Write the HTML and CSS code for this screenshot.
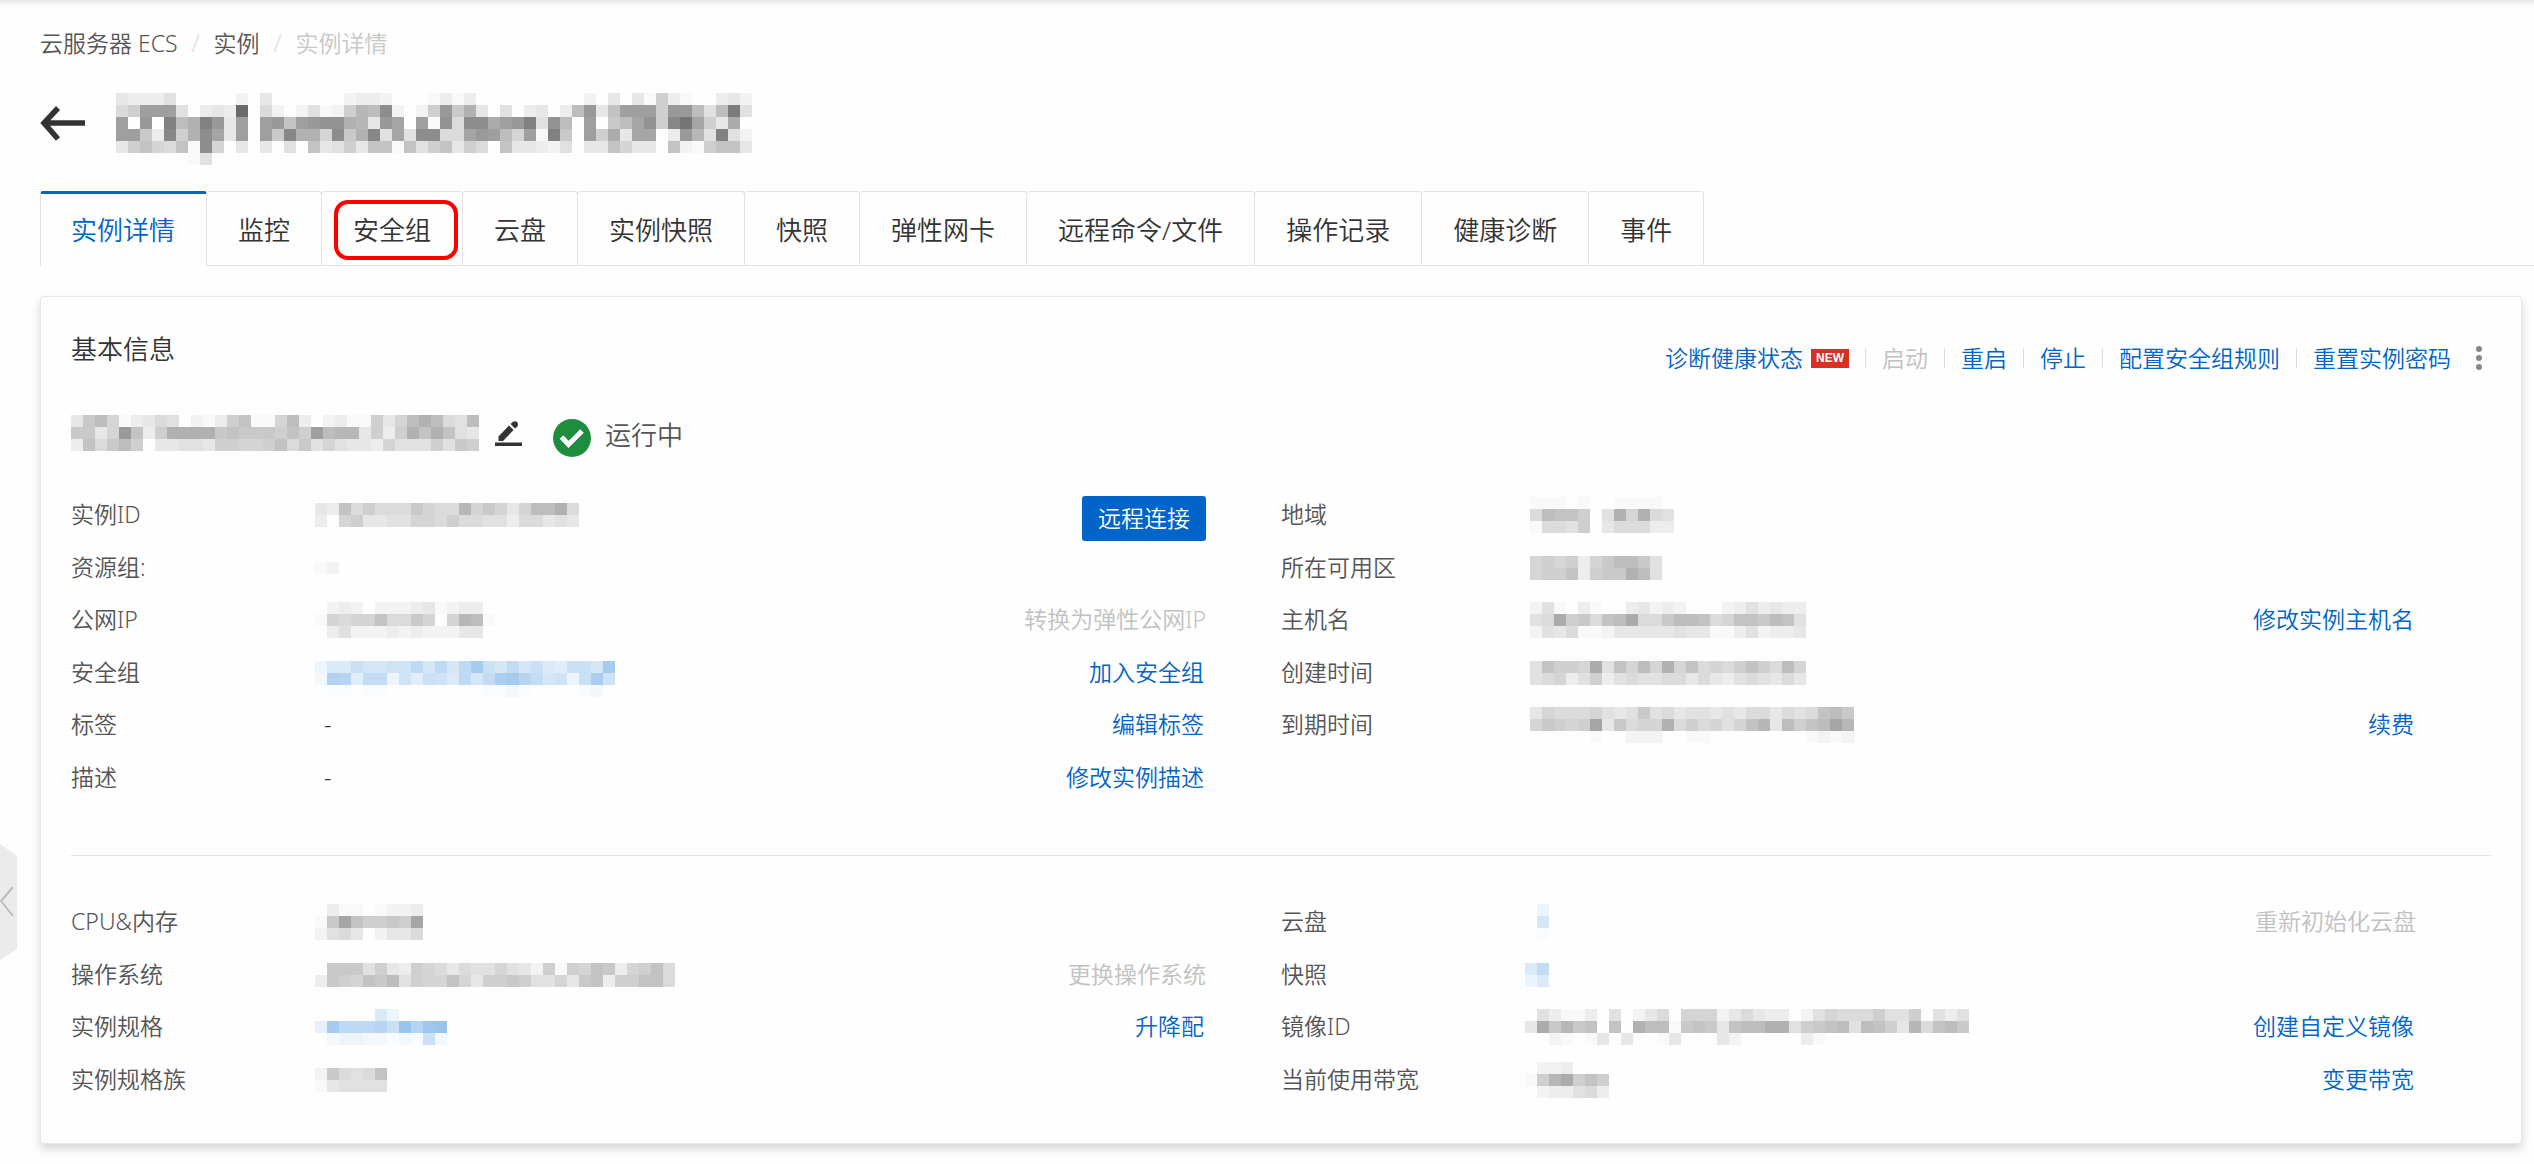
FILE: index.html
```html
<!DOCTYPE html>
<html lang="zh-CN">
<head>
<meta charset="utf-8">
<meta name="viewport" content="width=device-width, initial-scale=1">
<title>实例详情</title>
<link rel="stylesheet" href="styles.css">
</head>
<body>
<button class="side-toggle" type="button" aria-label="展开">
  <svg width="18" height="116" viewBox="0 0 18 116" aria-hidden="true"><path d="M0 0L17 12V105L0 116Z" fill="#ebebeb"/><path d="M13 43L1 57L13 72" fill="none" stroke="#bbb" stroke-width="2"/></svg>
</button>
<div class="page">
  <nav class="breadcrumb" aria-label="breadcrumb">
    <a href="#">云服务器 ECS</a><span class="slash">/</span><a href="#">实例</a><span class="slash">/</span><span class="current">实例详情</span>
  </nav>

  <header class="title">
    <a class="back" href="#" aria-label="返回">
      <svg width="45" height="60" viewBox="0 0 45 60" aria-hidden="true"><path d="M45 30H5M18 15L4 30L18 46" fill="none" stroke="#333" stroke-width="5.5"/></svg>
    </a>
    <h1><svg class="mosaic" data-rows="EDDDFAAAAACAEAAAAAACDDCAAABDBDAAAAAAAAACAEAEBIDBAADEC GIQQQFADEDZAGCACFBCIMLTCACIRJNEAFADEADLREKQQQIRRLFLWF QARAVLNVREQAQRKQRSSNMERPAQBSGTTOQRVFSLAQAJLPSIUXPIEOA QQJDUINTPEQAQJUNNHTJNUFPFTTGGPRQLHQBVJAQIOEPPADRMFVFC EIKHGKBTHAEAEAFAKEFIEKKBKFIKEIGAKEEDCFAEEKHEEAKCBIKKE AAAAAABFA"></svg></h1>
  </header>

  <nav class="tabs">
    <a class="tab active" href="#">实例详情</a>
    <a class="tab" href="#">监控</a>
    <a class="tab marked" href="#">安全组</a>
    <a class="tab" href="#">云盘</a>
    <a class="tab" href="#">实例快照</a>
    <a class="tab" href="#">快照</a>
    <a class="tab" href="#">弹性网卡</a>
    <a class="tab" href="#">远程命令/文件</a>
    <a class="tab" href="#">操作记录</a>
    <a class="tab" href="#">健康诊断</a>
    <a class="tab" href="#">事件</a>
  </nav>

  <main class="card">
    <div class="card-head">
      <h2>基本信息</h2>
      <div class="actions">
        <a href="#">诊断健康状态</a><span class="badge">NEW</span>
        <span class="sep"></span><span class="disabled">启动</span>
        <span class="sep"></span><a href="#">重启</a>
        <span class="sep"></span><a href="#">停止</a>
        <span class="sep"></span><a href="#">配置安全组规则</a>
        <span class="sep"></span><a href="#">重置实例密码</a>
        <button class="more" type="button" aria-label="更多">
          <svg width="8" height="24" viewBox="0 0 8 24" aria-hidden="true"><g fill="#888"><circle cx="4" cy="3" r="3"/><circle cx="4" cy="12" r="3"/><circle cx="4" cy="21" r="3"/></g></svg>
        </button>
      </div>
    </div>

    <div class="name-row">
      <svg class="mosaic" data-rows="EJLHBDEGFACBDIKBBHLDACDBBIEHLNLGFL JJEHRKDINNNNJKJJJIKIQLMMEIDINKNKFE DKGJLIAEEFFEIIHHIKGJFHFEEDHFFFIFJI"></svg>
      <button class="edit" type="button" aria-label="编辑">
        <svg width="28" height="44" viewBox="0 0 28 44" aria-hidden="true"><g fill="#333"><path d="M0 27.500h27v3.500H0z"/><path d="M3.500 26V21.500L14 10.500L18.500 15L8 26Z"/><path d="M15.500 9L18 6.700Q20.500 5.500 22.300 7.300Q24 9.300 22.500 11.500L20 13.600Z"/></g></svg>
      </button>
      <svg class="ok" width="38" height="44" viewBox="0 0 38 44" aria-hidden="true"><circle cx="19" cy="23" r="19" fill="#1e8e3e"/><path d="M8.500 22L15.500 29.500L29 16" fill="none" stroke="#fff" stroke-width="5"/></svg>
      <span class="status">运行中</span>
    </div>

    <section class="fields basic">
      <dl>
        <div><dt>实例ID</dt><dd><svg class="mosaic" data-rows="EDKGIGGGJHGGMHJHEHLLNG DAHIEEFFHHGIGGFFDGGEFE"></svg></dd><dd class="end"><button class="primary" type="button">远程连接</button></dd></div>
        <div><dt>资源组:</dt><dd><svg class="mosaic" data-rows="BC"></svg></dd></div>
        <div><dt>公网IP</dt><dd><svg class="mosaic" data-rows="ACDCACCCDEBCDDA BHGHHKGGJHAHMLB ADFCCCDCDCCCEEA"></svg></dd><dd class="act"><span class="disabled">转换为弹性公网IP</span></dd></div>
        <div><dt>安全组</dt><dd><svg class="mosaic" data-tone="blue" data-rows="A DGGJHHIILHLHLPJHKHJGFJJHP CNMFKKDIFJIGLHKOPMKHIDJOI ABBABBAAAAAAAABBCBAAAABCA"></svg></dd><dd class="act"><a href="#">加入安全组</a></dd></div>
        <div><dt>标签</dt><dd class="text">-</dd><dd class="act"><a href="#">编辑标签</a></dd></div>
        <div><dt>描述</dt><dd class="text">-</dd><dd class="act"><a href="#">修改实例描述</a></dd></div>
      </dl>
      <dl>
        <div><dt>地域</dt><dd><svg class="mosaic" data-rows="BBBABAABBBBA GLKKIAFNHNGF BGGFIAEGGGDD"></svg></dd></div>
        <div><dt>所在可用区</dt><dd><svg class="mosaic" data-rows="HIHIDHJLLJF HIIKDIJJNLF"></svg></dd></div>
        <div><dt>主机名</dt><dd><svg class="mosaic" data-rows="CFBADBAADECDCAAACDFDEDD FGOIJGKLOGGJLLKGHKKJLKF CFEGBBCEEEEEFEEBBDFCDDE"></svg></dd><dd class="act"><a href="#">修改实例主机名</a></dd></div>
        <div><dt>创建时间</dt><dd><svg class="mosaic" data-rows="FKIIHOFKHLHNHKGHGIKIGLH FGHDFIDFGFFGGEGEDFGFEGE"></svg></dd></div>
        <div><dt>到期时间</dt><dd><svg class="mosaic" data-rows="EHGGGHFEFJFGEFFEFEGGEGFGKLJ HJIHIPEJGHHNGIGHFHKMELIKLPM AAAAABAACCCAABBAAAAAAAABCBC"></svg></dd><dd class="act"><a href="#">续费</a></dd></div>
      </dl>
    </section>

    <section class="fields config">
      <dl>
        <div><dt>CPU&amp;内存</dt><dd><svg class="mosaic" data-rows="ADBBABCCD BJPKIIJIP CFGEACEEG"></svg></dd></div>
        <div><dt>操作系统</dt><dd><svg class="mosaic" data-rows="AJJJFIEDIHGEGFFHFECIBIHKJDHIKG DJIHKJLFIHHKHEIIJIFFHEJKDIIKKG"></svg></dd><dd class="act"><span class="disabled">更换操作系统</span></dd></div>
        <div><dt>实例规格</dt><dd><svg class="mosaic" data-tone="blue" data-rows="AAAAAGDAAAA EPLLLMJRMQR ACDDCCBCBJC"></svg></dd><dd class="act"><a href="#">升降配</a></dd></div>
        <div><dt>实例规格族</dt><dd><svg class="mosaic" data-rows="CJGFGK BEFFFF"></svg></dd></div>
      </dl>
      <dl>
        <div><dt>云盘</dt><dd><svg class="mosaic" data-tone="blue" data-rows="AD AH AB"></svg></dd><dd class="act"><span class="disabled">重新初始化云盘</span></dd></div>
        <div><dt>快照</dt><dd><svg class="mosaic" data-tone="blue" data-rows="GK DG"></svg></dd></div>
        <div><dt>镜像ID</dt><dd><svg class="mosaic" data-rows="AFDBBDAFACEGAHHHCEGEDDACFHGGGIFFIAFDF EOJMJKAKANLLBJKJEKLLNNFIJKLFLKIEMGKLJ AACBABEAEAABEAAAECAAAAADBAAAAAAAAAAAA"></svg></dd><dd class="act"><a href="#">创建自定义镜像</a></dd></div>
        <div><dt>当前使用带宽</dt><dd><svg class="mosaic" data-rows="ACCDAAA BIMOIKI ACDDFGD"></svg></dd><dd class="act"><a href="#">变更带宽</a></dd></div>
      </dl>
    </section>
  </main>
</div>
<script src="mosaic.js"></script>
</body>
</html>
```
FILE: styles.css
```css
* {
  box-sizing: border-box;
}

body {
  margin: 0;
  min-height: 100vh;
  background: linear-gradient(#e6e6e6, #fafafa 5px, #fefefe 10px) no-repeat #fefefe;
  color: #333;
  font-family: "Noto Sans", "Noto Sans CJK SC", sans-serif;
  font-size: 23px;
  font-weight: 350;
  line-height: 34px;
}

h1,
h2,
dl,
dd {
  margin: 0;
  font-weight: inherit;
}

a {
  color: #0064c8;
  text-decoration: none;
}

button {
  padding: 0;
  border: 0;
  background: none;
  font: inherit;
}

svg {
  display: block;
}

.page {
  padding: 26px 0 20px 40px;
}

.side-toggle {
  position: absolute;
  left: 0;
  top: 844px;
}

.breadcrumb {
  display: flex;
}

.breadcrumb a {
  color: #555;
}

.breadcrumb .slash {
  margin: 0 14px;
  color: #ddd;
}

.breadcrumb .current {
  color: #c8c8c8;
}

.title {
  display: flex;
  align-items: flex-start;
  gap: 31px;
  margin-top: 33px;
}

.tabs {
  display: flex;
  margin-top: 26px;
  border-bottom: 1px solid #e3e3e3;
}

.tab {
  position: relative;
  height: 74px;
  padding: 0 31px;
  border: 1px solid #e3e3e3;
  border-width: 1px 1px 0 0;
  border-radius: 3px 3px 0 0;
  color: #333;
  font-size: 26px;
  line-height: 76px;
}

.tab.active {
  height: 75px;
  margin-bottom: -1px;
  border-left-width: 1px;
  border-top: 3px solid #0064c8;
  background: #fefefe;
  color: #0064c8;
  padding-left: 30px;
  line-height: 72px;
}

.tab.marked::after {
  content: "";
  position: absolute;
  inset: 8px 4px 5px 12px;
  border: 4px solid #f00;
  border-radius: 14px;
}

.card {
  margin: 30px 12px 0 0;
  padding: 34px 30px 37px;
  border: 1px solid #e6e6e6;
  border-radius: 4px;
  background: #fefefe;
  box-shadow: 0 5px 10px rgba(0, 0, 0, 0.16);
}

.card-head {
  display: flex;
  justify-content: space-between;
  min-height: 45px;
}

.card-head h2 {
  font-size: 26px;
  line-height: 36px;
}

.actions {
  display: flex;
  align-items: center;
  align-self: flex-end;
  height: 36px;
}

.sep {
  width: 1px;
  height: 20px;
  margin: 0 16px;
  background: #ddd;
}

.badge {
  margin-left: 8px;
  padding: 0 5px;
  background: #d93026;
  color: #fff;
  font: bold 12px/19px "Liberation Sans", sans-serif;
}

.disabled {
  color: #c1c1c1;
}

.more {
  margin: 0 8px 0 24px;
}

.name-row {
  display: flex;
  align-items: flex-start;
  margin: 39px 0 30px;
}

.edit {
  margin: 0 30px 0 16px;
}

.status {
  margin-left: 14px;
  color: #555;
  font-size: 26px;
  line-height: 40px;
}

.fields {
  display: grid;
  grid-template-columns: 1fr 1fr;
}

.fields dl {
  display: grid;
  align-content: start;
  grid-auto-rows: 52px 53px;
  padding-right: 75px;
}

.fields dl > div {
  display: grid;
  grid-template-columns: 244px 1fr auto;
  align-items: center;
}

.basic dl + dl > div {
  grid-template-columns: 249px 1fr auto;
}

.config {
  margin-top: 51px;
  padding-top: 40px;
  border-top: 1px solid #e3e3e3;
}

.fields dt {
  color: #555;
}

.fields dt,
.fields .text,
.fields .act {
  padding-bottom: 2px;
}

.fields .text {
  padding-left: 9px;
}

.fields .act a {
  padding-right: 2px;
}

.fields .end {
  align-self: end;
}

.primary {
  padding: 0 16px;
  border-radius: 3px;
  background: #0064c8;
  color: #fff;
  line-height: 45px;
}
```
FILE: mosaic.js
```js
// Draws masked values as 12px tiles. Each letter is a shade: A is blank, Z is darkest.
const TILE = 12;
const NS = "http://www.w3.org/2000/svg";
const STEPS = { grey: [6, 6, 6], blue: [6, 3.5, 1.1] };

document.querySelectorAll(".mosaic").forEach((svg) => {
  const rows = svg.dataset.rows.split(" ");
  const step = STEPS[svg.dataset.tone || "grey"];
  svg.setAttribute("width", Math.max(...rows.map((r) => r.length)) * TILE);
  svg.setAttribute("height", rows.length * TILE);
  svg.setAttribute("aria-hidden", "true");
  rows.forEach((row, y) => {
    [...row].forEach((letter, x) => {
      const level = letter.charCodeAt(0) - 65;
      if (!level) return;
      const rect = document.createElementNS(NS, "rect");
      rect.setAttribute("x", x * TILE);
      rect.setAttribute("y", y * TILE);
      rect.setAttribute("width", TILE);
      rect.setAttribute("height", TILE);
      rect.setAttribute("fill", `rgb(${step.map((s) => Math.round(255 - s * level)).join(",")})`);
      svg.appendChild(rect);
    });
  });
});
```
